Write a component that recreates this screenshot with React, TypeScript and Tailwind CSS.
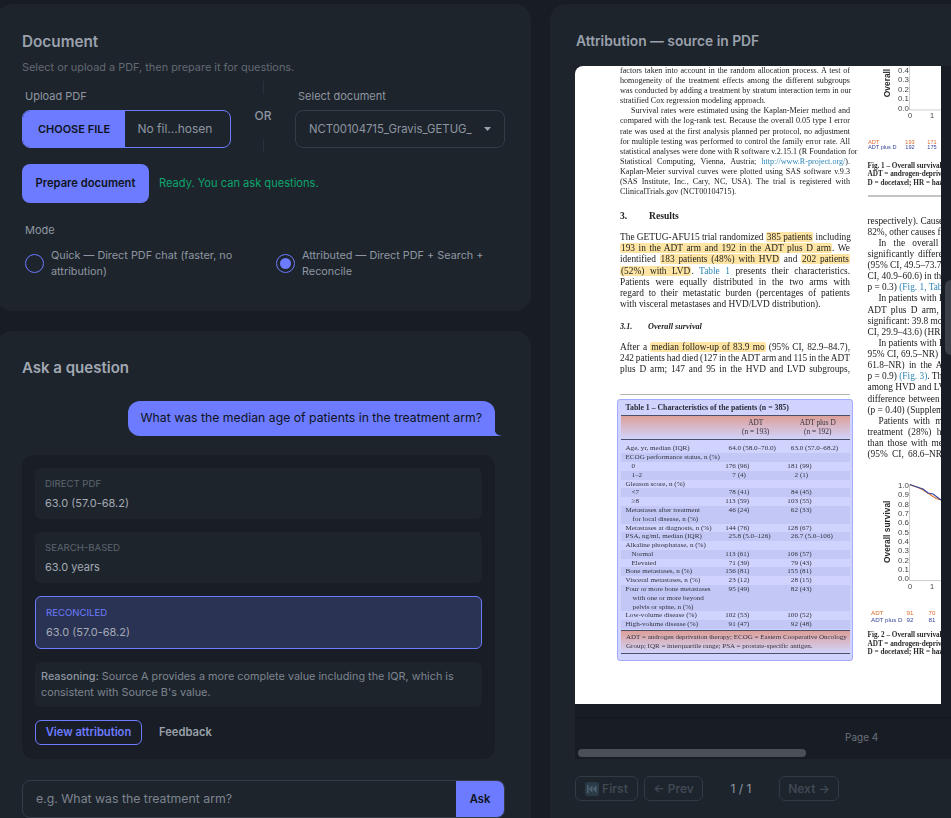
import type { ReactNode } from 'react'

const accent = 'bg-[#6c7bff]'

function Hl({ children }: { children: ReactNode }) {
  return <span className="rounded-[2px] bg-[#ffe5a3] px-[1px]">{children}</span>
}

function Lnk({ children }: { children: ReactNode }) {
  return <span className="text-[#2d86b8]">{children}</span>
}

// one justified line of the page
function L({ children, last, h = 'small', className = '' }: { children: ReactNode; last?: boolean; h?: 'small' | 'big'; className?: string }) {
  const size = h === 'small' ? 'h-[10.1px] text-[8.1px] leading-[10.1px]' : 'h-[11.13px] text-[9.35px] leading-[11.13px]'
  return (
    <div className={`${size} whitespace-nowrap ${last ? '' : '[text-align-last:justify]'} ${className}`}>{children}</div>
  )
}

const tableRows: { label: string[]; a?: string; b?: string; indent?: boolean }[] = [
  { label: ['Age, yr, median (IQR)'], a: '64.0 (58.0–70.0)', b: '63.0 (57.0–68.2)' },
  { label: ['ECOG performance status, n (%)'] },
  { label: ['0'], a: '176 (96)', b: '181 (99)', indent: true },
  { label: ['1–2'], a: '7 (4)', b: '2 (1)', indent: true },
  { label: ['Gleason score, n (%)'] },
  { label: ['<7'], a: '78 (41)', b: '84 (45)', indent: true },
  { label: ['≥8'], a: '113 (59)', b: '103 (55)', indent: true },
  { label: ['Metastases after treatment', '    for local disease, n (%)'], a: '46 (24)', b: '62 (33)' },
  { label: ['Metastases at diagnosis, n (%)'], a: '144 (76)', b: '128 (67)' },
  { label: ['PSA, ng/ml, median (IQR)'], a: '25.8 (5.0–126)', b: '26.7 (5.0–106)' },
  { label: ['Alkaline phosphatase, n (%)'] },
  { label: ['Normal'], a: '113 (61)', b: '106 (57)', indent: true },
  { label: ['Elevated'], a: '71 (39)', b: '79 (43)', indent: true },
  { label: ['Bone metastases, n (%)'], a: '156 (81)', b: '155 (81)' },
  { label: ['Visceral metastases, n (%)'], a: '23 (12)', b: '28 (15)' },
  { label: ['Four or more bone metastases', '    with one or more beyond', '    pelvis or spine, n (%)'], a: '95 (49)', b: '82 (43)' },
  { label: ['Low-volume disease (%)'], a: '102 (53)', b: '100 (52)' },
  { label: ['High-volume disease (%)'], a: '91 (47)', b: '92 (48)' },
]

// values line up on the bracket, not on the first digit
function Val({ v }: { v?: string }) {
  if (!v) return <div className="w-[64.3px]" />
  const n = v.split(' ')[0].length
  const pad = n >= 4 || n === 2 ? 'pl-[3.6px]' : n === 1 ? 'pl-[7.3px]' : 'pl-0'
  return <div className={`w-[64.3px] ${pad}`}>{v}</div>
}

function PatientsTable() {
  return (
    <div className="mt-[4px] -mx-[3px] h-[262px] rounded-[3px] border border-[#a3abff] bg-[#cfd3fd] px-[2.5px] pt-[3px] font-['Liberation_Serif',serif] text-[#33333d]">
      <div className="h-[9.5px] pl-[5px] text-[7.8px] font-bold leading-[9.5px] text-[#2b2b36]">
        Table 1 – Characteristics of the patients (n = 385)
      </div>
      <div className="mt-[2.5px] flex h-[25px] border-y border-[#4c4f66] bg-gradient-to-b from-[#dc9f98] to-[#cfd3fd] pt-[3px] text-[7.3px] leading-[8.8px]">
        <div className="w-[103px]" />
        <div className="w-[64.3px] pl-[3px] text-center">ADT<br />(n = 193)</div>
        <div className="w-[64.3px] text-center">ADT plus D<br />(n = 192)</div>
      </div>
      <div className="mt-[4px] text-[7.1px] leading-[8.78px]">
        {tableRows.map((r, i) => (
          <div key={i} className={`flex ${i % 2 === 1 ? 'bg-[#c2c7f6]' : ''}`}>
            <div className={`w-[108px] whitespace-pre pr-0 ${r.indent ? 'pl-[11px]' : 'pl-[5px]'}`}>
              {r.label.map((t) => (
                <div key={t}>{t}</div>
              ))}
            </div>
            <Val v={r.a} />
            <Val v={r.b} />
          </div>
        ))}
      </div>
      <div className="mt-[1px] h-[24px] border-y border-[#4c4f66] bg-gradient-to-b from-[#dc9f98] to-[#cfd3fd] pl-[5.5px] pt-[2.5px] text-[7px] leading-[8.7px]">
        <div>ADT = androgen deprivation therapy; ECOG = Eastern Cooperative Oncology</div>
        <div>Group; IQR = interquartile range; PSA = prostate-specific antigen.</div>
      </div>
    </div>
  )
}

function SurvivalChart({ ticks, ylabel, tall, adt, plusD }: { ticks: string[]; ylabel: string; tall?: boolean; adt: string[]; plusD: string[] }) {
  const step = tall ? 9.36 : 9.5
  const height = tall ? 152 : 90
  const top = tall ? 6 : 4
  const axisBottom = top + step * (ticks.length - 1) + 2
  return (
    <svg width="73" height={height} className="block font-['Liberation_Sans',sans-serif]">
      <text x="0" y="0" transform={`translate(22 ${top + step * (ticks.length - 1) / 2 + (tall ? 0 : -6)}) rotate(-90)`} textAnchor="middle" fontSize="8.4" fontWeight="700" fill="#2b2b2b">
        {ylabel}
      </text>
      {ticks.map((t, i) => (
        <text key={t} x="30" y={top + step * i + 2.8} fontSize="7.9" fill="#444">{t}</text>
      ))}
      <path d={`M41.5 ${tall ? top - 1 : -2}V${axisBottom}H73`} fill="none" stroke="#b9b9b9" strokeWidth="0.7" />
      <text x="42" y={axisBottom + 8} textAnchor="middle" fontSize="7.4" fill="#444">0</text>
      <text x="64" y={axisBottom + 8} textAnchor="middle" fontSize="7.4" fill="#444">1</text>
      {tall && (
        <>
          <path d="M42 6l8 2.5 6 3 6 4 6 4 5 1.5" fill="none" stroke="#e07b39" strokeWidth="1.2" />
          <path d="M42 5.5l7 2.5 6 2 5 4 5 1 4 3 4 3" fill="none" stroke="#34459c" strokeWidth="1.2" />
        </>
      )}
      <g fontSize={tall ? 6.2 : 5.6}>
        <text x={tall ? 3 : 0} y={axisBottom + 34} fill="#dd6a2a">ADT</text>
        <text x={tall ? 3 : 0} y={axisBottom + (tall ? 41 : 39)} fill="#34459c">ADT plus D</text>
        <text x="42" y={axisBottom + 34} textAnchor="middle" fill="#dd6a2a">{adt[0]}</text>
        <text x="64" y={axisBottom + 34} textAnchor="middle" fill="#dd6a2a">{adt[1]}</text>
        <text x="42" y={axisBottom + (tall ? 41 : 39)} textAnchor="middle" fill="#34459c">{plusD[0]}</text>
        <text x="64" y={axisBottom + (tall ? 41 : 39)} textAnchor="middle" fill="#34459c">{plusD[1]}</text>
      </g>
    </svg>
  )
}

function Caption({ lines }: { lines: string[] }) {
  return (
    <div className="whitespace-nowrap text-[7.2px] font-bold leading-[8.35px] text-[#2b2b2b]">
      {lines.map((t) => (
        <div key={t}>{t}</div>
      ))}
    </div>
  )
}

function PdfPage() {
  return (
    <div className="flex h-[638px] w-[366px] shrink-0 overflow-hidden rounded-tl-[8px] bg-white pl-[45px] font-['Liberation_Serif',serif] text-[#222222] blur-[0.35px]">
      {/* left column */}
      <div className="w-[230px] shrink-0">
        <L>factors taken into account in the random allocation process. A test of</L>
        <L>homogeneity of the treatment effects among the different subgroups</L>
        <L>was conducted by adding a treatment by stratum interaction term in our</L>
        <L last>stratified Cox regression modeling approach.</L>
        <L><span className="inline-block w-[11px]" />Survival rates were estimated using the Kaplan-Meier method and</L>
        <L>compared with the log-rank test. Because the overall 0.05 type I error</L>
        <L>rate was used at the first analysis planned per protocol, no adjustment</L>
        <L>for multiple testing was performed to control the family error rate. All</L>
        <L>statistical analyses were done with R software v.2.15.1 (R Foundation for</L>
        <L>Statistical Computing, Vienna, Austria; <Lnk>http://www.R-project.org/</Lnk>).</L>
        <L>Kaplan-Meier survival curves were plotted using SAS software v.9.3</L>
        <L>(SAS Institute, Inc., Cary, NC, USA). The trial is registered with</L>
        <L last>ClinicalTrials.gov (NCT00104715).</L>
        <div className="mt-[13px] flex h-[11px] text-[9.6px] font-bold leading-[11px]">
          <span className="w-[29px]">3.</span>
          <span>Results</span>
        </div>
        <div className="mt-[11px]">
          <L h="big">The GETUG-AFU15 trial randomized <Hl>385 patients</Hl> including</L>
          <L h="big"><Hl>193 in the ADT arm and 192 in the ADT plus D arm</Hl>. We</L>
          <L h="big">identified <Hl>183 patients (48%) with HVD</Hl> and <Hl>202 patients</Hl></L>
          <L h="big"><Hl>(52%) with LVD</Hl>. <Lnk>Table 1</Lnk> presents their characteristics.</L>
          <L h="big">Patients were equally distributed in the two arms with</L>
          <L h="big">regard to their metastatic burden (percentages of patients</L>
          <L h="big" last>with visceral metastases and HVD/LVD distribution).</L>
        </div>
        <div className="mt-[11.5px] flex h-[10px] text-[8.2px] font-bold italic leading-[10px]">
          <span className="w-[28px]">3.1.</span>
          <span>Overall survival</span>
        </div>
        <div className="mt-[10.5px]">
          <L h="big">After a <Hl>median follow-up of 83.9 mo</Hl> (95% CI, 82.9–84.7),</L>
          <L h="big" className="[word-spacing:-1px]">242 patients had died (127 in the ADT arm and 115 in the ADT</L>
          <L h="big">plus D arm; 147 and 95 in the HVD and LVD subgroups,</L>
        </div>
        <div className="mt-[19px] h-[1px] bg-[#b5b5b5]" />
        <PatientsTable />
      </div>

      {/* right column, cut off by the viewer */}
      <div className="ml-[17.5px] w-[230px] shrink-0">
        <SurvivalChart ticks={['0.4', '0.3', '0.2', '0.1', '0.0']} ylabel="Overall" adt={['193', '171']} plusD={['192', '175']} />
        <div className="mt-[6px]">
          <Caption lines={['Fig. 1 – Overall survival by treatment', 'ADT = androgen-deprivation therapy;', 'D = docetaxel; HR = hazard ratio']} />
        </div>
        <div className="mt-[8px] h-[1.5px] bg-[#c4c4c4]" />
        <div className="mt-[19px]">
          <L h="big" last>respectively). Causes of death</L>
          <L h="big" last>82%, other causes for the rest</L>
          <L h="big" last className="[word-spacing:5px]"><span className="inline-block w-[11px]" />In the overall population</L>
          <L h="big" last className="[word-spacing:1.5px]">significantly different</L>
          <L h="big" last>(95% CI, 49.5–73.7)</L>
          <L h="big" last>CI, 40.9–60.6) in the</L>
          <L h="big" last>p = 0.3) <Lnk>(Fig. 1, Table 2)</Lnk></L>
          <L h="big" last><span className="inline-block w-[11px]" />In patients with HVD</L>
          <L h="big" last className="[word-spacing:2px]">ADT plus D arm, the</L>
          <L h="big" last>significant: 39.8 mo</L>
          <L h="big" last>CI, 29.9–43.6) (HR: 0.8)</L>
          <L h="big" last><span className="inline-block w-[11px]" />In patients with LVD</L>
          <L h="big" last>95% CI, 69.5–NR) in</L>
          <L h="big" last className="[word-spacing:2px]">61.8–NR) in the ADT</L>
          <L h="big" last>p = 0.9) <Lnk>(Fig. 3)</Lnk>. The</L>
          <L h="big" last>among HVD and LVD</L>
          <L h="big" last className="[word-spacing:1px]">difference between</L>
          <L h="big" last>(p = 0.40) (Supplementary</L>
          <L h="big" last className="[word-spacing:3px]"><span className="inline-block w-[11px]" />Patients with metastases</L>
          <L h="big" last className="[word-spacing:3px]">treatment (28%) had</L>
          <L h="big" last className="[word-spacing:1.5px]">than those with metastases</L>
          <L h="big" last className="[word-spacing:2px]">(95% CI, 68.6–NR)</L>
        </div>
        <div className="mt-[19px]">
          <SurvivalChart tall ticks={['1.0', '0.9', '0.8', '0.7', '0.6', '0.5', '0.4', '0.3', '0.2', '0.1', '0.0']} ylabel="Overall survival" adt={['91', '70']} plusD={['92', '81']} />
        </div>
        <Caption lines={['Fig. 2 – Overall survival by treatment', 'ADT = androgen-deprivation therapy;', 'D = docetaxel; HR = hazard ratio']} />
      </div>
    </div>
  )
}

function AnswerCard({ label, value }: { label: string; value: string }) {
  return (
    <div className="h-[51px] rounded-md bg-[#1d242c] px-[10px] pt-[9px]">
      <div className="text-[9.6px] uppercase leading-[14px] text-[#5d646e]">{label}</div>
      <div className="mt-[3px] text-[11px] leading-[18px] text-[#a4aab4]">{value}</div>
    </div>
  )
}

function Radio({ checked, children }: { checked?: boolean; children: ReactNode }) {
  return (
    <label className="flex items-center gap-[7px] text-[10.85px] leading-[16px] text-[#8f96a1]">
      <span className="flex h-[19px] w-[19px] shrink-0 items-center justify-center rounded-full border border-[#6c7bff]">
        {checked && <span className={`h-[11px] w-[11px] rounded-full ${accent}`} />}
      </span>
      <span>{children}</span>
    </label>
  )
}

function NavButton({ children, className }: { children: ReactNode; className: string }) {
  return (
    <button className={`flex h-[25px] items-center justify-center gap-[3px] rounded-md border border-[#323a44] text-[12px] font-semibold text-[#3f4853] ${className}`}>
      {children}
    </button>
  )
}

export default function App() {
  return (
    <div className="flex h-[818px] w-[951px] items-start gap-[19px] overflow-hidden bg-[#181c24] pt-[4px] font-['Inter',sans-serif]">
      {/* left side */}
      <div className="-ml-[4px] flex w-[535px] shrink-0 flex-col gap-[20px]">
        <section className="h-[307px] rounded-[16px] bg-[#1d242c] pl-[26px] pr-[26px] pt-[28px]">
          <h2 className="text-[15.3px] font-semibold leading-[20px] text-[#9aa1ac]">Document</h2>
          <p className="mt-[7px] text-[10.9px] leading-[16px] text-[#626973]">Select or upload a PDF, then prepare it for questions.</p>
          <div className="mt-[6px] flex">
            <div className="w-[209px] shrink-0">
              <div className="mb-[6px] mt-[7px] pl-[3px] text-[11px] leading-[16px] text-[#8f96a1]">Upload PDF</div>
              <div className="flex h-[38px] overflow-hidden rounded-lg border border-[#6c7bff]">
                <div className={`flex w-[102px] shrink-0 items-center justify-center ${accent} text-[11px] font-semibold text-[#0f1420]`}>CHOOSE FILE</div>
                <div className="flex flex-1 items-center pl-[12.5px] text-[12px] text-[#8f96a1]">No fil...hosen</div>
              </div>
            </div>
            <div className="flex h-[67px] w-[64px] shrink-0 flex-col items-center">
              <div className="h-[13px] w-px shrink-0 bg-[#2a313a]" />
              <div className="mt-[13px] text-[12px] font-medium leading-[18px] text-[#8f96a1]">OR</div>
              <div className="mt-[14px] h-[13px] w-px shrink-0 bg-[#2a313a]" />
            </div>
            <div className="w-[210px] shrink-0">
              <div className="mb-[6px] mt-[7px] pl-[3px] text-[11px] leading-[16px] text-[#8f96a1]">Select document</div>
              <div className="flex h-[38px] items-center justify-between rounded-lg border border-[#343b45] pl-[13px] pr-[13px] text-[11.3px] text-[#8f96a1]">
                <span>NCT00104715_Gravis_GETUG_</span>
                <svg width="7" height="4" viewBox="0 0 7 4"><path d="M0 0h7L3.5 4z" fill="#9aa1ac" /></svg>
              </div>
            </div>
          </div>
          <div className="mt-[16px] flex items-center gap-[10px]">
            <button className={`h-[39px] w-[127px] rounded-lg ${accent} text-[11.2px] font-semibold text-[#0f1420]`}>Prepare document</button>
            <span className="text-[11.1px] text-[#0ea56d]">Ready. You can ask questions.</span>
          </div>
          <div className="mt-[19px] pl-[3px] text-[11px] leading-[16px] text-[#8f96a1]">Mode</div>
          <div className="mt-[9px] flex pl-[3px]">
            <div className="w-[251px] shrink-0 pr-[18px]">
              <Radio>Quick — Direct PDF chat (faster, no attribution)</Radio>
            </div>
            <div className="w-[225px]">
              <Radio checked>Attributed — Direct PDF + Search + Reconcile</Radio>
            </div>
          </div>
        </section>

        <section className="h-[520px] rounded-[16px] bg-[#1d242c] pl-[26px] pr-[26px] pt-[26px]">
          <h2 className="mt-[1px] text-[15px] font-semibold leading-[20px] text-[#a2a8b3]">Ask a question</h2>
          <div className="mt-[23px] flex justify-end pr-[10px]">
            <div className={`relative flex h-[35px] items-center rounded-[12px] rounded-br-none ${accent} px-[13px] text-[12.25px] text-[#0f1420]`}>
              What was the median age of patients in the treatment arm?
              <svg className="absolute -right-[8px] bottom-0" width="9" height="9" viewBox="0 0 9 9">
                <path d="M0 0C0 5 3 9 9 9H0z" fill="#6c7bff" />
              </svg>
            </div>
          </div>
          <div className="mt-[19px] mr-[10px] flex h-[304px] flex-col gap-[13px] rounded-[12px] bg-[#191d25] px-[13px] pt-[13px]">
            <AnswerCard label="Direct PDF" value="63.0 (57.0-68.2)" />
            <AnswerCard label="Search-based" value="63.0 years" />
            <div className="h-[53px] rounded-md border border-[#6c7bff] bg-[#2a3353] px-[10px] pt-[9px]">
              <div className="text-[9.6px] uppercase leading-[14px] text-[#6c7bff]">Reconciled</div>
              <div className="mt-[3px] text-[11px] leading-[18px] text-[#a4aab4]">63.0 (57.0-68.2)</div>
            </div>
            <div className="h-[45px] rounded-md bg-[#1d242c] px-[6px] pt-[6px] text-[10.85px] leading-[16px] text-[#7e858f]">
              <span className="font-medium text-[#8f96a1]">Reasoning:</span> Source A provides a more complete value including the IQR, which is consistent with Source B's value.
            </div>
            <div className="flex items-center gap-[17px]">
              <button className="h-[25px] w-[107px] rounded-md border border-[#6c7bff] text-[11.2px] font-semibold text-[#6c7bff]">View attribution</button>
              <button className="text-[11.2px] font-semibold text-[#9aa1ac]">Feedback</button>
            </div>
          </div>
          <div className="mt-[21px] flex h-[38px] overflow-hidden rounded-lg border border-[#343b45]">
            <div className="flex flex-1 items-center pl-[13px] text-[12.3px] text-[#7e858f]">e.g. What was the treatment arm?</div>
            <button className={`w-[48px] ${accent} text-[11.2px] font-semibold text-[#0f1420]`}>Ask</button>
          </div>
        </section>
      </div>

      {/* right side */}
      <section className="h-[900px] w-[440px] shrink-0 rounded-tl-[16px] bg-[#1d242c] pl-[25px] pt-[27px]">
        <h2 className="pl-[1px] text-[13.8px] font-semibold leading-[20px] text-[#9aa1ac]">Attribution — source in PDF</h2>
        <div className="relative mt-[15px] h-[693px] bg-[#181c24]">
          <PdfPage />
          <div className="mt-[13px] border-t border-[#14171d] pt-[12px] pl-[270px] text-[10px] leading-[14px] text-[#6b727c]">Page 4</div>
          {/* scrollbars */}
          <div className="absolute bottom-[2px] left-[3px] h-[8px] w-[228px] rounded-full bg-[#4a5058]" />
          <div className="absolute left-[370px] top-[214px] h-[75px] w-[6px] rounded-l-md bg-[#3a4048]" />
        </div>
        <div className="mt-[17px] flex items-center">
          <NavButton className="w-[63px]">
            <span className="flex h-[14px] w-[14px] items-center justify-center rounded-[3px] bg-[#2b3a47]">
              <svg width="10" height="8" viewBox="0 0 10 8" fill="#4d6070"><path d="M0 0h1.6v8H0zM5.5 0v8L1.8 4zM9.6 0v8L5.9 4z" /></svg>
            </span>
            First
          </NavButton>
          <NavButton className="ml-[6px] w-[59px]">← Prev</NavButton>
          <div className="w-[76px] text-center text-[12px] font-normal text-[#8f96a1]">1 / 1</div>
          <NavButton className="w-[60px]">Next →</NavButton>
        </div>
      </section>
    </div>
  )
}
